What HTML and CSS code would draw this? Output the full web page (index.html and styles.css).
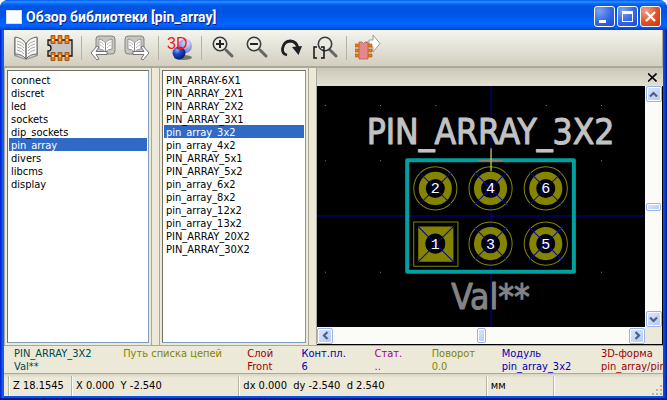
FILE: index.html
```html
<!DOCTYPE html>
<html lang="ru">
<head>
<meta charset="utf-8">
<title>Обзор библиотеки [pin_array]</title>
<link rel="stylesheet" href="styles.css">
</head>
<body>
<div class="window">
  <header class="titlebar">
    <span class="app-icon"></span>
    <h1 class="title">Обзор библиотеки [pin_array]</h1>
    <div class="caption-buttons">
      <button class="cap" aria-label="Свернуть"><svg width="19" height="19"><path d="M4 13h7v3H4z" fill="#fff"/></svg></button>
      <button class="cap" aria-label="Развернуть"><svg width="19" height="19"><path d="M4 4h11v11H4zM5 7v7h9V7z" fill="#fff" fill-rule="evenodd"/></svg></button>
      <button class="cap cap-close" aria-label="Закрыть"><svg width="19" height="19"><path d="M5 5l9 9M14 5l-9 9" stroke="#fff" stroke-width="2.4"/></svg></button>
    </div>
  </header>

  <div class="client">
    <nav class="toolbar">
      <button class="tool" aria-label="Выбрать библиотеку"><svg width="26" height="26" viewBox="0 0 26 26"><path d="M1 23h24v2H1z" fill="#d5d4ca"/><path d="M1 3l2-1v18l10 4 10-4V2l2 1v18l-12 4L1 21z" fill="#999"/><path d="M2 2q8 1 11 7v15Q9 19 2 19zM24 2q-8 1-11 7v15q4-5 11-5z" fill="#f8f8f4" stroke="#666"/><path d="M4 6q5 1 7 4M4 9q5 1 7 4M4 12q5 1 7 4M4 15q5 1 7 4M22 6q-5 1-7 4M22 9q-5 1-7 4M22 12q-5 1-7 4M22 15q-5 1-7 4" fill="none" stroke="#aaa"/></svg></button>
      <button class="tool" aria-label="Выбрать модуль"><svg width="26" height="26" viewBox="0 0 26 26"><path d="M1 5h24v16H1v-5q3 0 3-3t-3-3z" fill="#c4c4c4" stroke="#111" stroke-width="1.3"/><g fill="#f57900" stroke="#8a3900" stroke-width=".7"><path d="M4 .5h4v8H4zM11 .5h4v8h-4zM18 .5h4v8h-4zM4 17.500h4v8H4zM11 17.500h4v8h-4zM18 17.500h4v8h-4z"/></g><path d="M5 4h2v2H5zM12 4h2v2h-2zM19 4h2v2h-2zM5 20h2v2H5zM12 20h2v2h-2zM19 20h2v2h-2z" fill="#ffd09a"/></svg></button>
      <span class="tool-sep"></span>
      <button class="tool" aria-label="Предыдущий модуль"><svg width="26" height="26" viewBox="0 0 26 26"><rect x="6" y="1" width="19" height="18" rx="3" fill="#c6c5be" stroke="#858580"/><path d="M9 4q5 1 6.500 4v9Q13 14 9 14zM22 4q-5 1-6.500 4v9q2.500-3 6.500-3z" fill="#fff" stroke="#888" stroke-width=".8"/><path d="M10 7q3 1 4 3M10 10q3 1 4 3M21 7q-3 1-4 3M21 10q-3 1-4 3" fill="none" stroke="#bbb"/><path d="M1 18l6-7 2 1-3 4.500h11v3H6L9 24l-2 1z" fill="#fff" stroke="#666" stroke-width=".9"/></svg></button>
      <button class="tool" aria-label="Следующий модуль"><svg width="26" height="26" viewBox="0 0 26 26"><rect x="1" y="1" width="19" height="18" rx="3" fill="#c6c5be" stroke="#858580"/><path d="M4 4q5 1 6.500 4v9Q8 14 4 14zM17 4q-5 1-6.500 4v9q2.500-3 6.500-3z" fill="#fff" stroke="#888" stroke-width=".8"/><path d="M5 7q3 1 4 3M5 10q3 1 4 3M16 7q-3 1-4 3M16 10q-3 1-4 3" fill="none" stroke="#bbb"/><path d="M25 18l-6-7-2 1 3 4.500H9v3h11L17 24l2 1z" fill="#fff" stroke="#666" stroke-width=".9"/></svg></button>
      <span class="tool-sep"></span>
      <button class="tool" aria-label="3D просмотр"><svg width="26" height="26" viewBox="0 0 26 26"><defs><radialGradient id="ball" cx=".35" cy=".3" r=".7"><stop offset="0" stop-color="#8ab0ff"/><stop offset=".4" stop-color="#1c4ec8"/><stop offset="1" stop-color="#061f70"/></radialGradient><radialGradient id="ball2" cx=".6" cy=".3" r=".7"><stop offset="0" stop-color="#e4ebff"/><stop offset="1" stop-color="#5a78d0"/></radialGradient></defs><ellipse cx="16" cy="22.500" rx="9" ry="2.500" fill="#77746a"/><circle cx="18" cy="11" r="7" fill="url(#ball2)"/><circle cx="12" cy="18" r="6.500" fill="url(#ball)"/><text class="icon-3d" x="0" y="14">3D</text></svg></button>
      <span class="tool-sep"></span>
      <button class="tool" aria-label="Приблизить"><svg width="26" height="26" viewBox="0 0 26 26"><path d="M16 15l6 6" stroke="#666" stroke-width="3" stroke-linecap="round"/><circle cx="10" cy="9" r="6.700" fill="#eeede6" stroke="#3a3d3c" stroke-width="1.600"/><path d="M10 5v8M6 9h8" stroke="#222" stroke-width="2"/></svg></button>
      <button class="tool" aria-label="Отдалить"><svg width="26" height="26" viewBox="0 0 26 26"><path d="M16 15l6 6" stroke="#666" stroke-width="3" stroke-linecap="round"/><circle cx="10" cy="9" r="6.700" fill="#eeede6" stroke="#3a3d3c" stroke-width="1.600"/><path d="M6 9h8" stroke="#222" stroke-width="2"/></svg></button>
      <button class="tool" aria-label="Обновить"><svg width="26" height="26" viewBox="0 0 26 26"><path d="M9 20Q4 19 4.500 13.500 6 6 12.500 6q6 .5 7.500 7" fill="none" stroke="#1b1f20" stroke-width="2.800"/><path d="M14 12l10-1-3.500 9z" fill="#1b1f20"/></svg></button>
      <button class="tool" aria-label="Показать всё"><svg width="26" height="26" viewBox="0 0 26 26"><path d="M17 14l7 7" stroke="#666" stroke-width="3" stroke-linecap="round"/><circle cx="13" cy="9" r="6.700" fill="#eeede6" fill-opacity=".6" stroke="#3a3d3c" stroke-width="1.600"/><path d="M5 12H2v11h3M9 12h3v11H9" fill="none" stroke="#111" stroke-width="1.500"/></svg></button>
      <span class="tool-sep"></span>
      <button class="tool" aria-label="Вставить модуль в плату"><svg width="26" height="26" viewBox="0 0 26 26"><path d="M14 5h4V0l7 8.500-7 8.500v-5h-4z" fill="#fff" stroke="#999"/><g fill="#f57900" stroke="#9a5518" stroke-width=".6"><path d="M0 9h6v3H0zM0 14h6v3H0zM0 19h6v3H0zM12 9h5v3h-5zM12 14h5v3h-5zM12 19h5v3h-5z"/></g><path d="M4 7h3l1.500 1.500L10 7h3v17H4z" fill="#e28a8a" stroke="#a55" stroke-width=".7"/></svg></button>
    </nav>

    <main class="panes">
      <div class="list-pane">
        <select class="list" size="20" aria-label="Библиотеки">
          <option>connect</option><option>discret</option><option>led</option><option>sockets</option><option>dip_sockets</option><option selected>pin_array</option><option>divers</option><option>libcms</option><option>display</option>
        </select>
      </div>
      <div class="sash"></div>
      <div class="list-pane list-pane-wide">
        <select class="list" size="20" aria-label="Модули">
          <option>PIN_ARRAY-6X1</option><option>PIN_ARRAY_2X1</option><option>PIN_ARRAY_2X2</option><option>PIN_ARRAY_3X1</option><option selected>pin_array_3x2</option><option>pin_array_4x2</option><option>PIN_ARRAY_5x1</option><option>PIN_ARRAY_5x2</option><option>pin_array_6x2</option><option>pin_array_8x2</option><option>pin_array_12x2</option><option>pin_array_13x2</option><option>PIN_ARRAY_20X2</option><option>PIN_ARRAY_30X2</option>
        </select>
      </div>
      <div class="sash"></div>
      <section class="view">
        <div class="view-caption"><button class="view-close" aria-label="Закрыть панель"><svg width="9" height="9"><path d="M0 .5l8.500 8M8.500 .5L0 8.500" stroke="#000" stroke-width="1.600"/></svg></button></div>
        <div class="scroller">
          <svg class="board" viewBox="317 86 327 240" preserveAspectRatio="xMidYMid slice">
            <defs>
              <g id="pad"><circle r="21.500" fill="none" stroke="#848400"/><circle r="13" fill="none" stroke="#848400" stroke-width="7"/><path d="M-17-17l34 34M17-17l-34 34" stroke="#0000c0"/></g>
            </defs>
            <g fill="#848484"><path d="M325 105h1v1h-1zM380 105h1v1h-1zM435 105h1v1h-1zM545 105h1v1h-1zM600 105h1v1h-1zM325 160h1v1h-1zM380 160h1v1h-1zM600 160h1v1h-1zM325 271h1v1h-1zM380 271h1v1h-1zM600 271h1v1h-1z"/></g>
            <path d="M317 215.500h327M490.500 86v240" stroke="#0000a8"/>
            <text class="ref" x="490" y="144">PIN_ARRAY_3X2</text>
            <text class="val" x="490" y="308">Val**</text>
            <rect x="407" y="160" width="166" height="111" fill="none" stroke="#00a0a0" stroke-width="4" stroke-linejoin="round"/>
            <use href="#pad" x="435" y="188"/><use href="#pad" x="490" y="188"/><use href="#pad" x="545" y="188"/>
            <use href="#pad" x="490" y="243"/><use href="#pad" x="545" y="243"/>
            <path d="M413.500 221.500h44v44h-44z" fill="none" stroke="#848400"/>
            <path d="M418 226h35v35h-35z" fill="#848400"/><circle cx="435" cy="243" r="10" fill="#000"/>
            <path d="M418 226l35 35M453 226l-35 35" stroke="#0000c0"/>
            <path d="M490.500 148v23" stroke="#ffff20"/><path d="M478 160.500h24" stroke="#e06060"/>
            <g class="nums"><text x="435" y="193">2</text><text x="490" y="193">4</text><text x="545" y="193">6</text><text x="435" y="248">1</text><text x="490" y="248">3</text><text x="545" y="248">5</text></g>
          </svg>
          <div class="bar bar-v">
            <button class="arrow" aria-label="Вверх"><svg width="9" height="9"><path d="M1 6.500L4.500 3 8 6.500" class="chev"/></svg></button>
            <span class="thumb thumb-v"></span>
            <button class="arrow" aria-label="Вниз"><svg width="9" height="9"><path d="M1 2.500L4.500 6 8 2.500" class="chev"/></svg></button>
          </div>
          <div class="bar bar-h">
            <button class="arrow" aria-label="Влево"><svg width="9" height="9"><path d="M6.500 1L3 4.500 6.500 8" class="chev"/></svg></button>
            <span class="thumb thumb-h"></span>
            <button class="arrow" aria-label="Вправо"><svg width="9" height="9"><path d="M2.500 1L6 4.500 2.500 8" class="chev"/></svg></button>
          </div>
          <div class="corner"></div>
        </div>
      </section>
    </main>

    <dl class="info">
      <div class="teal"><dt>PIN_ARRAY_3X2</dt><dd>Val**</dd></div>
      <div class="olive"><dt>Путь списка цепей</dt><dd></dd></div>
      <div class="red"><dt>Слой</dt><dd>Front</dd></div>
      <div class="blue"><dt>Конт.пл.</dt><dd>6</dd></div>
      <div class="purple"><dt>Стат.</dt><dd>..</dd></div>
      <div class="olive"><dt>Поворот</dt><dd>0.0</dd></div>
      <div class="blue"><dt>Модуль</dt><dd>pin_array_3x2</dd></div>
      <div class="red"><dt>3D-форма</dt><dd>pin_array/pin</dd></div>
    </dl>

    <footer class="status">
      <span>Z 18.1545</span><span>X 0.000&nbsp; Y -2.540</span><span>dx 0.000&nbsp; dy -2.540&nbsp; d 2.540</span><span>мм</span><span class="status-end"><svg width="12" height="12"><path d="M9 1h2v2H9zM5 5h2v2H5zM9 5h2v2H9zM1 9h2v2H1zM5 9h2v2H5zM9 9h2v2H9z" fill="#b8b4a2"/></svg></span>
    </footer>
  </div>
</div>
</body>
</html>
```
FILE: styles.css
```css
* { box-sizing: border-box; }
body { margin: 0; background: #fff; font: 11px/13px "DejaVu Sans Condensed", "DejaVu Sans", sans-serif; color: #000; }
button { border: 0; padding: 0; margin: 0; background: none; display: grid; place-items: center; }
svg { display: block; }

.window { display: flex; flex-direction: column; height: 100vh; padding: 0 4px 4px; border-radius: 8px 8px 0 0; overflow: hidden;
  background: linear-gradient(90deg, #0019cf, #0831d9 1px, #166aee 3px, #0855dd 4px, #0855dd calc(100% - 4px), #0040d8 calc(100% - 2px), #00138c);
  box-shadow: inset 0 -2px #0019a0; }
.titlebar { display: flex; align-items: center; flex: none; height: 30px; margin: 0 -4px; padding: 3px 6px 0; 
  background: linear-gradient(#0058ee, #3593ff 2px, #0674ff 3px, #0455e4 6px, #0053e1 12px, #005cf5 19px, #0066ff 25px, #005bf0 27px, #003dd7); }
.app-icon { width: 16px; height: 14px; background: #fff; border: 1px solid #d8dce8; }
.title { flex: 1; margin: 0 0 0 4px; font: bold 14px/20px Roboto, sans-serif; color: #fff; text-shadow: 1px 1px #0b1c84; white-space: nowrap; }
.caption-buttons { display: flex; gap: 2px; }
.cap { width: 21px; height: 21px; border: 1px solid #fff; border-radius: 3px; background: radial-gradient(circle at 25% 20%, #7da2f4, #3565e6 55%, #1c49d0); }
.cap-close { background: radial-gradient(circle at 25% 20%, #f0a08a, #e2512a 55%, #c83208); }

.client { flex: 1; min-height: 0; display: flex; flex-direction: column; background: #ece9d8; }
.toolbar { flex: none; display: flex; align-items: center; height: 38px; padding: 0 5px; background: linear-gradient(#f5f4ee, #d2cfbf); border-right: 1px solid #aca899; border-bottom: 2px solid #aca899; }
.tool { width: 34px; height: 34px; }
.tool-sep { width: 1px; height: 24px; margin: 0 4px; background: #b6b3a4; }
.icon-3d { font: 16px "Liberation Sans Narrow", "Liberation Sans", sans-serif; fill: #f01818; }

.panes { flex: 1; min-height: 0; display: flex; }
.list-pane { flex: 0 0 148px; display: flex; padding: 2px 2px 2px 2px; border-right: 1px solid #aca899; background: #ece9d8; border-left: 1px solid #aca899; }
.list-pane-wide { flex-basis: 150px; }
.sash { flex: none; width: 5px; margin: 0 1px; background: #ece9d8; }
.list { flex: 1; min-width: 0; height: 100%; margin: 0; padding: 2px 1px; border: 1px solid #7f9db9; border-top-color: #716f64; border-left-color: #716f64; border-radius: 0; background: #fff; color: #000; font: inherit; overflow: hidden; outline: 0; scrollbar-width: none; }
.list option { height: 13px; min-height: 13px; padding: 1px 2px 0; font: inherit; line-height: 13px; }
.list option:checked { background: #316ac5 linear-gradient(#316ac5, #316ac5); color: #fff; -webkit-text-fill-color: #fff; }

.view { flex: 1; min-width: 0; display: flex; flex-direction: column; border-left: 1px solid #aca899; }
.view-caption { flex: none; display: flex; justify-content: flex-end; align-items: center; height: 18px; padding-right: 6px; background: linear-gradient(#cbc7b8, #e4e0d2); }
.scroller { flex: 1; min-height: 0; display: grid; grid-template: minmax(0, 1fr) 17px / minmax(0, 1fr) 17px; border-right: 1px solid #000; border-bottom: 1px solid #000; }
.board { width: 100%; height: 100%; background: #000; }
.ref, .val { font: 35px "DejaVu Sans Condensed", sans-serif; text-anchor: middle; fill: #c2c2c2; stroke: #c2c2c2; stroke-width: 1; stroke-linejoin: round; }
.val { fill: #848484; stroke: #848484; }
.nums { font: 15px "Liberation Mono", monospace; text-anchor: middle; fill: #fff; }
.bar { display: flex; justify-content: space-between; align-items: center; background: #fbfbf8; }
.bar-v { flex-direction: column; }
.bar-h { grid-row: 2; }
.arrow, .thumb { border: 1px solid #98b4e8; border-radius: 2px; background: linear-gradient(135deg, #dce6ff, #b4c8f6); box-shadow: inset 0 0 0 1px #fff; }
.arrow { width: 16px; height: 16px; }
.chev { fill: none; stroke: #4d6185; stroke-width: 2.2; }
.thumb-v { width: 15px; height: 8px; }
.thumb-h { width: 9px; height: 15px; }
.corner { background: #ece9d8; }

.info { flex: none; display: grid; grid-template-columns: 109fr 124fr 54fr 73fr 57fr 70fr 99fr 62fr; height: 29px; margin: 0; padding: 1px 0 0 10px; border-top: 1px solid #aca899; border-bottom: 1px solid #aca899; white-space: nowrap; overflow: hidden; }
.info div { min-width: 0; }
.info div:last-child { overflow: hidden; }
.info dd { margin: 0; }
.teal { color: #004848; } .olive { color: #848400; } .red { color: #9c0000; } .blue { color: #0000b4; } .purple { color: #9c009c; }

.status { flex: none; display: grid; grid-template-columns: 63fr 167fr 247fr 67fr 110fr; height: 22px; padding: 2px 0 1px 4px; background: linear-gradient(#d8d5c6, #ece9d8 4px); white-space: nowrap; }
.status span { padding-left: 4px; line-height: 20px; border-left: 1px solid #b8b5a5; box-shadow: inset 1px 0 #fff; }
.status .status-end { display: flex; justify-content: flex-end; align-items: flex-end; }
```
